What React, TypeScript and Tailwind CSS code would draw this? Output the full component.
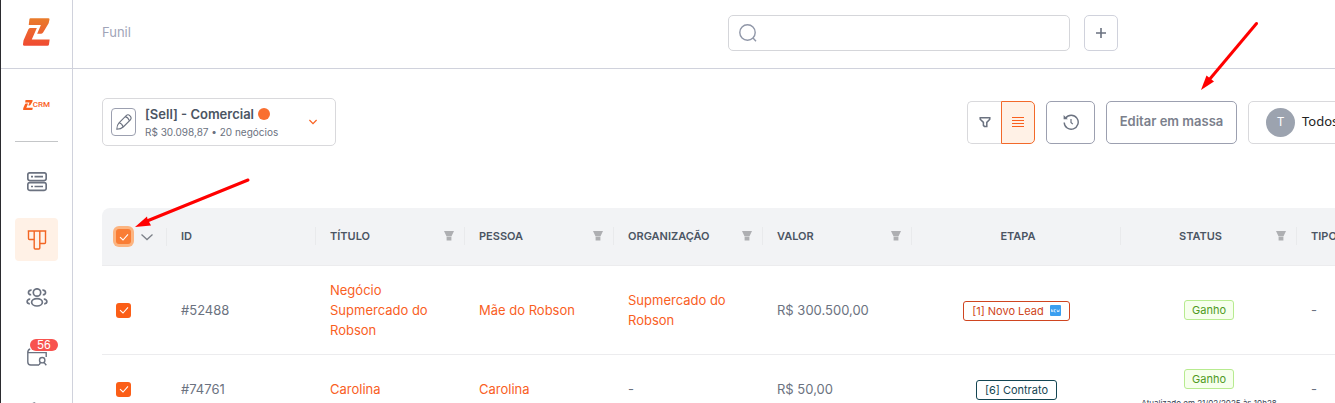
import React from 'react';

interface Deal {
  id: string;
  title: string;
  person: string;
  organization?: string;
  value: string;
  stage: string;
  isNew?: boolean;
  stageClass: string;
  updatedAt?: string;
}

const deals: Deal[] = [
  {
    id: '#52488',
    title: 'Negócio Supmercado do Robson',
    person: 'Mãe do Robson',
    organization: 'Supmercado do Robson',
    value: 'R$ 300.500,00',
    stage: '[1] Novo Lead',
    isNew: true,
    stageClass: 'border-[#cf4520] text-[#cf4520]',
  },
  {
    id: '#74761',
    title: 'Carolina',
    person: 'Carolina',
    value: 'R$ 50,00',
    stage: '[6] Contrato',
    stageClass: 'border-[#134552] text-[#134552]',
    updatedAt: 'Atualizado em 21/02/2025 às 10h28',
  },
];

const columns = [
  { label: 'ID', filter: false, center: false },
  { label: 'TÍTULO', filter: true, center: false },
  { label: 'PESSOA', filter: true, center: false },
  { label: 'ORGANIZAÇÃO', filter: true, center: false },
  { label: 'VALOR', filter: true, center: false },
  { label: 'ETAPA', filter: false, center: true },
  { label: 'STATUS', filter: true, center: true },
  { label: 'TIPO', filter: false, center: false },
];

const ZMark = ({ className, flat }: { className: string; flat?: boolean }) => (
  <svg viewBox="0 0 80 82" className={className} aria-hidden="true">
    <defs>
      <linearGradient id="zmark" x1="0" y1="0" x2="0" y2="82" gradientUnits="userSpaceOnUse">
        <stop offset="0" stopColor="#e97c2b" />
        <stop offset="1" stopColor="#f04a32" />
      </linearGradient>
    </defs>
    <g fill={flat ? '#f9601f' : 'url(#zmark)'}>
      <path d="M22 0h53q4 0 3.500 4L76 15 60 42q-2 4-6 4H42l11-26H17l2-17q.5-3 3-3z" />
      <path d="M22 29h19L26 63h53l-2 15q-.5 4-5 4H4q-4.500 0-4-5l1.500-11L16 33q2-4 6-4z" />
    </g>
  </svg>
);

const ServerIcon = () => (
  <svg viewBox="0 0 20 20" className="size-5" fill="none" stroke="#6b7280" strokeWidth="1.7">
    <rect x=".8" y=".8" width="18.4" height="7.8" rx="2" />
    <rect x=".8" y="10.600" width="18.4" height="7.8" rx="2" />
    <path d="M4 4.700h2M7.500 4.700H16M4 14.500h2M7.500 14.500H16" />
  </svg>
);

const FunnelBoardIcon = () => (
  <svg viewBox="0 0 20 20" className="size-5" fill="none" stroke="#f26522" strokeWidth="1.4">
    <path d="M.7 1h18.6M1.5 1v7.5q0 1 1 1h3.7q1 0 1-1V1M7.2 1v17q0 1 1 1h3.6q1 0 1-1V1M12.800 1v11.5q0 1 1 1h3.7q1 0 1-1V1" />
  </svg>
);

const PeopleIcon = () => (
  <svg viewBox="0 1 22 20" className="h-5 w-[22px]" fill="none" stroke="#6b7280" strokeWidth="1.7">
    <circle cx="11" cy="5.500" r="3.7" />
    <ellipse cx="11" cy="15.300" rx="5.400" ry="3.7" />
    <path d="M5.600 3.200C1.500 2.800 1.500 8 5.200 7.700M16.400 3.200c4.100-.4 4.100 4.800.4 4.500M4.200 12.200C.2 12 .2 16.600 3.800 16.800M17.800 12.200c4-.2 4 4.400.4 4.600" />
  </svg>
);

const WalletSearchIcon = () => (
  <svg viewBox="0 -2 20 20" className="size-5" fill="none" stroke="#6b7280" strokeWidth="1.4">
    <path d="M19.200 9V4.600H.8M.8 3.500V14q0 3 3 3H12M.8 4.600q0-3 2.400-3.600" />
    <circle cx="15.200" cy="12.200" r="2.700" />
    <path d="m13.400 14.400-1.200 2.600M17 14.400l2.300 2.800" />
  </svg>
);

const MoreIcon = () => (
  <svg viewBox="0 0 20 20" className="size-6" fill="none" stroke="#6b7280" strokeWidth="1.4">
    <path d="M6 2.500q.5-2 2.500-1.500M12.500 1.500h2M4 8l2-5.500M16 8l-1.500-6M4 8q-4 10 4 11h4q8-1 4-11z" />
  </svg>
);

const ColumnFilterIcon = () => (
  <svg viewBox="0 0 10 10" className="size-2.5" fill="#aeafb2">
    <path d="M0 0h10L7.400 5.400H2.600zM2.600 6h4.800v3.400H2.600z" />
  </svg>
);

const Checkbox = ({ label, focused }: { label: string; focused?: boolean }) => (
  <span className="grid size-[15px] place-items-center">
    <input
      type="checkbox"
      defaultChecked
      aria-label={label}
      className={`peer col-start-1 row-start-1 size-[15px] appearance-none rounded-[3px] ${
        focused ? 'checked:bg-[#f97d35] ring-3 ring-[#fcb480]' : 'checked:bg-[#fb5e17]'
      }`}
    />
    <svg
      viewBox="0 0 10 10"
      className="pointer-events-none col-start-1 row-start-1 hidden size-2.5 peer-checked:block"
      fill="none"
      stroke="white"
      strokeWidth="1.1"
    >
      <path d="M1 5.200 4 8l5-5.600" />
    </svg>
  </span>
);

const navItems = [
  { label: 'Painel', icon: <ServerIcon /> },
  { label: 'Funil', icon: <FunnelBoardIcon />, active: true },
  { label: 'Contatos', icon: <PeopleIcon /> },
  { label: 'Atividades', icon: <WalletSearchIcon />, badge: 56 },
  { label: 'Mais', icon: <MoreIcon /> },
];

const Sidebar = () => (
  <aside className="flex w-[73px] shrink-0 flex-col items-center border-x border-l-[#2b2b2f] border-r-[#d0d2dc]">
    <a href="#" aria-label="Início" className="flex h-[69px] w-full shrink-0 items-center justify-center border-b border-[#d0d2dc] pb-1">
      <ZMark className="h-7 w-[27px]" />
    </a>
    <a href="#" className="flex h-[72px] shrink-0 items-center font-[Roboto,sans-serif] text-[8px] font-medium text-[#f9601f]">
      <ZMark className="h-2.5 w-2.5" flat />
      CRM
    </a>
    <hr className="w-[43px] shrink-0 border-[#c4c6c8]" />
    <nav className="mt-[18px] flex flex-col gap-[15px]">
      {navItems.map((item) => (
        <a
          key={item.label}
          href="#"
          aria-label={item.label}
          className={`relative flex size-[43px] items-center justify-center rounded ${item.active ? 'bg-[#fff1e6]' : ''}`}
        >
          {item.icon}
          {item.badge && (
            <span className="absolute top-[5px] right-0 w-7 rounded-full bg-[#f8534f] text-center font-[Liberation_Sans,sans-serif] text-xs leading-3 text-white">
              {item.badge}
            </span>
          )}
        </a>
      ))}
    </nav>
  </aside>
);

const Header = () => (
  <header className="flex h-[69px] items-center border-b border-[#d0d2dc] pr-[217px] pb-[3px] pl-[29px]">
    <span className="text-[13px] text-[#a0a4b8]">Funil</span>
    <label className="ml-auto flex h-9 w-[342px] items-center rounded-[5px] border border-[#d5d6da] px-2.5">
      <svg viewBox="0 0 18 18" className="size-[18px]" fill="none" stroke="#9097a8" strokeWidth="1.4">
        <circle cx="8.500" cy="8.500" r="7.700" />
        <path d="m14 14 3 3.200" />
      </svg>
      <input type="search" aria-label="Buscar" className="min-w-0 flex-1 pl-2 text-[13px] outline-none" />
    </label>
    <button aria-label="Adicionar" className="ml-3.5 flex h-9 w-[34px] items-center justify-center rounded-[5px] border border-[#d0d2dc]">
      <svg viewBox="0 0 10 10" className="size-2.5" stroke="#6b7280" strokeWidth="1.6">
        <path d="M5 0v10M0 5h10" />
      </svg>
    </button>
  </header>
);

const Toolbar = () => (
  <div className="flex items-center pt-[29px]">
    <div className="flex h-12 w-[234px] items-center rounded-[5px] border border-[#d9d9dc] pr-[18px] pl-2">
      <button aria-label="Editar funil" className="flex h-7 w-[25px] items-center justify-center rounded border border-[#9ca0b0]">
        <svg viewBox="0 0 16 16" className="size-4" fill="none" stroke="#6b7280" strokeWidth="1.1">
          <path d="M.8 15.200Q.8 11 3 8.800L10.200 1.600Q12-.2 14 1.800t.4 4L7.200 13Q5 15.200.8 15.200zM3 8.800q3 .6 4.200 4.200M9.200 2.600q3 .8 4.200 4.200" />
        </svg>
      </button>
      <div className="ml-[9px] flex-1">
        <p className="flex items-center gap-1 text-[13px] leading-5 font-semibold text-[#4b5563]">
          [Sell] - Comercial
          <span className="size-3 rounded-full bg-[#f96f30]" />
        </p>
        <p className="text-[10px] leading-4 text-[#6b7280]">R$ 30.098,87 • 20 negócios</p>
      </div>
      <button aria-label="Trocar funil">
        <svg viewBox="0 0 8 6" className="h-1.5 w-2" fill="none" stroke="#f9601f" strokeWidth="1.2">
          <path d="m.4 1 3.600 3.600L7.600 1" />
        </svg>
      </button>
    </div>
    <div className="-mr-[113px] ml-auto flex h-[43px] shrink-0 gap-[11px]">
      <div className="flex">
        <button aria-label="Filtrar" className="flex w-[34px] items-center justify-center rounded-l-[5px] border border-r-0 border-[#d9d9dc]">
          <svg viewBox="0 0 12 12" className="size-3" fill="none" stroke="#6b7280" strokeWidth="1.5">
            <path d="M1.200 1.800h9.600v1.400L7.800 6.400v4H5.400l-1-1v-3L1.200 3.200z" />
          </svg>
        </button>
        <button aria-label="Lista" className="flex w-[34px] items-center justify-center rounded-r-[5px] border border-[#f2692a] bg-[#fff1e6]">
          <svg viewBox="0 0 12 12" className="size-3" stroke="#f9601f" strokeWidth="1.2">
            <path d="M0 1.500h12M0 4.500h12M0 7.500h12M0 10.500h12" />
          </svg>
        </button>
      </div>
      <button aria-label="Histórico" className="flex w-[49px] items-center justify-center rounded-[5px] border border-[#9ca0b0]">
        <svg viewBox="0 0 16 16" className="size-4" fill="none" stroke="#6b7280" strokeWidth="1.400">
          <path d="M2.600 4A7 7 0 1 1 1.200 8.400" />
          <path d="M.6 1v4.200h4.200z" fill="#6b7280" stroke="none" />
          <path d="M8 5v3.400l1.800 1.800" strokeWidth="1.200" />
        </svg>
      </button>
      <button className="w-[131px] rounded-[5px] border border-[#9ca0b0] text-[13px] font-semibold whitespace-nowrap text-[#7b7f8c]">
        Editar em massa
      </button>
      <button className="flex w-[200px] items-center gap-[7px] rounded-[5px] border border-[#d9d9dc] pl-[17px] font-['Noto_Sans',sans-serif] text-[13px] text-[#222]">
        <span className="flex size-[29px] items-center justify-center rounded-full bg-[#9ca3af] font-[Inter,sans-serif] text-xs text-white">T</span>
        Todos
      </button>
    </div>
  </div>
);

const DealsTable = () => (
  <table className="mt-[62px] w-[1344px] table-fixed border-separate border-spacing-0 text-[13px] leading-5 text-[#6b7280]">
    <colgroup>
      <col className="w-[65px]" />
      <col className="w-[149px]" />
      <col className="w-[149px]" />
      <col className="w-[149px]" />
      <col className="w-[149px]" />
      <col className="w-[149px]" />
      <col className="w-[209px]" />
      <col className="w-[176px]" />
      <col className="w-[149px]" />
    </colgroup>
    <thead>
      <tr className="h-[58px] bg-[#f2f3f5] text-left text-[11px] text-[#4b5563]">
        <th className="rounded-tl-lg border-b border-[#ececee] pl-3.5">
          <div className="flex h-[18px] items-center justify-between border-r border-[#e9eaec] pr-[13px]">
            <Checkbox label="Selecionar todos" focused />
            <button aria-label="Opções de seleção">
              <svg viewBox="0 0 12 8" className="h-2 w-3" fill="none" stroke="#7c8088" strokeWidth="1.300">
                <path d="m.5 1.500 5.500 5 5.500-5" />
              </svg>
            </button>
          </div>
        </th>
        {columns.map((column) => (
          <th key={column.label} scope="col" className="border-b border-[#ececee] pb-0.5 font-semibold">
            <div className="flex h-[18px] items-center gap-2.5 border-r border-[#e9eaec] pr-2.5 pl-3.5">
              <span className={column.center ? 'flex-1 text-center' : 'flex-1'}>{column.label}</span>
              {column.filter && (
                <button aria-label={`Filtrar ${column.label}`}>
                  <ColumnFilterIcon />
                </button>
              )}
            </div>
          </th>
        ))}
      </tr>
    </thead>
    <tbody className="[&_td]:border-b [&_td]:border-[#ececee] [&_td]:px-3.5 [&_td]:py-3.5">
      {deals.map((deal) => (
        <tr key={deal.id}>
          <td>
            <Checkbox label={`Selecionar ${deal.id}`} />
          </td>
          <td>{deal.id}</td>
          <td>
            <a href="#" className="text-[#f9601f]">{deal.title}</a>
          </td>
          <td>
            <a href="#" className="text-[#f9601f]">{deal.person}</a>
          </td>
          <td>
            {deal.organization ? <a href="#" className="text-[#f9601f]">{deal.organization}</a> : '-'}
          </td>
          <td>{deal.value}</td>
          <td className="text-center">
            <span className={`inline-flex h-5 items-center gap-1.5 rounded-[3px] border px-2 align-middle text-[11px] ${deal.stageClass}`}>
              {deal.stage}
              {deal.isNew && (
                <svg viewBox="0 0 11 11" className="size-[11px]">
                  <rect width="11" height="11" rx="1" fill="#3b9ff0" />
                  <path d="M1.500 7V4.500L3 7V4.500M5.800 4.500H4.500V7h1.300M7 4.500 7.600 7l.6-1.500L8.800 7l.7-2.500" fill="none" stroke="white" strokeWidth=".6" />
                </svg>
              )}
            </span>
          </td>
          <td className="text-center">
            <span className="mx-auto flex h-5 w-[50px] items-center justify-center rounded-[3px] border border-[#b7eb8f] bg-[#f6ffed] text-[11px] text-[#4f9a24]">
              Ganho
            </span>
            {deal.updatedAt && (
              <p className="h-5 pt-2 text-[8px] leading-3 whitespace-nowrap text-[#374151]">{deal.updatedAt}</p>
            )}
          </td>
          <td>-</td>
        </tr>
      ))}
    </tbody>
  </table>
);

// red callout arrows that float over the page
const Callouts = () => (
  <>
    <svg viewBox="0 0 116 50" className="pointer-events-none absolute top-[178px] left-[134px] h-[50px] w-[116px]" fill="#f00">
      <path d="M114 2 13 43" stroke="#f00" strokeWidth="3" strokeLinecap="round" />
      <path d="M1 49 13 38.500 13.500 41 17 47.500z" />
    </svg>
    <svg viewBox="0 0 60 70" className="pointer-events-none absolute top-[21px] left-[1199px] h-[70px] w-[60px]" fill="#f00">
      <path d="M57.500 2.500 10 59" stroke="#f00" strokeWidth="3" strokeLinecap="round" />
      <path d="M2 69 7.500 54.500 15 60.500z" />
    </svg>
  </>
);

export default function App() {
  return (
    <div className="relative flex h-screen overflow-hidden bg-white font-[Inter,sans-serif]">
      <Sidebar />
      <div className="min-w-0 flex-1">
        <Header />
        <main className="pl-[29px]">
          <Toolbar />
          <DealsTable />
        </main>
      </div>
      <Callouts />
    </div>
  );
}
